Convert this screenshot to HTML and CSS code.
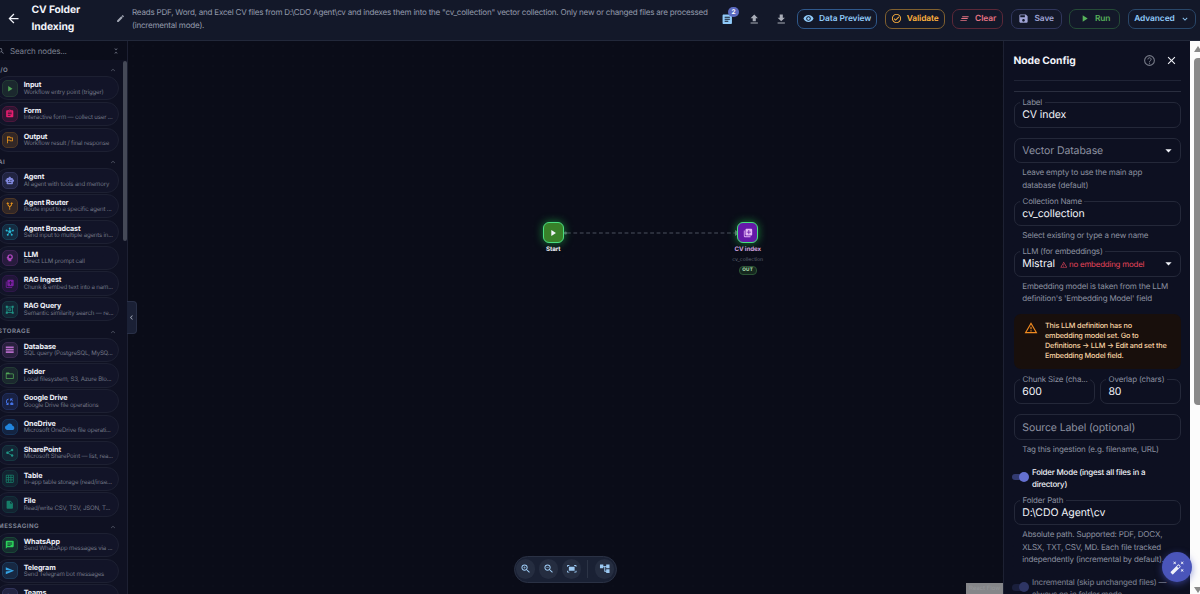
FILE: index.html
```html
<!DOCTYPE html>
<html lang="en">
<head>
	<meta charset="UTF-8">
	<meta name="viewport" content="width=device-width">
	<title>CV Folder Indexing</title>
	<link rel="stylesheet" href="styles.css">
</head>
<body>
<svg class="sprite">
	<symbol id="back" viewBox="0 0 24 24"><path d="M20 11H7.83l5.59-5.59L12 4l-8 8 8 8 1.41-1.41L7.83 13H20v-2z"/></symbol>
	<symbol id="edit" viewBox="0 0 24 24"><path d="M3 17.25V21h3.75L17.81 9.94l-3.75-3.75L3 17.25zM20.71 7.04a.996.996 0 0 0 0-1.41l-2.34-2.34a.996.996 0 0 0-1.41 0l-1.83 1.83 3.75 3.75 1.83-1.83z"/></symbol>
	<symbol id="article" viewBox="0 0 24 24"><path d="M19 3H5c-1.1 0-2 .9-2 2v14c0 1.1.9 2 2 2h14c1.1 0 2-.9 2-2V5c0-1.1-.9-2-2-2zm-5 14H7v-2h7v2zm3-4H7v-2h10v2zm0-4H7V7h10v2z"/></symbol>
	<symbol id="upload" viewBox="0 0 24 24"><path d="M5 20h14v-2H5v2zm4-4h6v-6h4l-7-7-7 7h4z"/></symbol>
	<symbol id="download" viewBox="0 0 24 24"><path d="M5 20h14v-2H5v2zM19 9h-4V3H9v6H5l7 7 7-7z"/></symbol>
	<symbol id="eye" viewBox="0 0 24 24"><path d="M12 4.5C7 4.5 2.73 7.61 1 12c1.73 4.39 6 7.5 11 7.5s9.27-3.11 11-7.5c-1.73-4.39-6-7.5-11-7.5zM12 17c-2.76 0-5-2.24-5-5s2.24-5 5-5 5 2.24 5 5-2.24 5-5 5zm0-8c-1.66 0-3 1.34-3 3s1.34 3 3 3 3-1.34 3-3-1.34-3-3-3z"/></symbol>
	<symbol id="check" viewBox="0 0 24 24"><path d="M16.59 7.58 10 14.17l-2.59-2.58L6 13l4 4 8-8zM12 2a10 10 0 1 0 0 20 10 10 0 0 0 0-20zm0 18c-4.42 0-8-3.58-8-8s3.58-8 8-8 8 3.58 8 8-3.58 8-8 8z"/></symbol>
	<symbol id="clear" viewBox="0 0 24 24"><path d="M5 13h14v-2H5v2zm-2 4h14v-2H3v2zM7 7v2h14V7H7z"/></symbol>
	<symbol id="save" viewBox="0 0 24 24"><path d="M17 3H5c-1.11 0-2 .9-2 2v14c0 1.1.89 2 2 2h14c1.1 0 2-.9 2-2V7l-4-4zm-5 16c-1.66 0-3-1.34-3-3s1.34-3 3-3 3 1.34 3 3-1.34 3-3 3zm3-10H5V5h10v4z"/></symbol>
	<symbol id="play" viewBox="0 0 24 24"><path d="M8 5v14l11-7z"/></symbol>
	<symbol id="down" viewBox="0 0 24 24"><path d="M7.41 8.59 12 13.17l4.59-4.58L18 10l-6 6-6-6z"/></symbol>
	<symbol id="up" viewBox="0 0 24 24"><path d="M7.41 15.41 12 10.83l4.59 4.58L18 14l-6-6-6 6z"/></symbol>
	<symbol id="left" viewBox="0 0 24 24"><path d="M15.41 7.41 14 6l-6 6 6 6 1.41-1.41L10.83 12z"/></symbol>
	<symbol id="caret" viewBox="0 0 24 24"><path d="M7 10l5 5 5-5z"/></symbol>
	<symbol id="search" viewBox="0 0 24 24"><path d="M15.5 14h-.79l-.28-.27A6.47 6.47 0 0 0 16 9.5 6.5 6.5 0 1 0 9.5 16c1.61 0 3.09-.59 4.23-1.57l.27.28v.79l5 4.99L20.49 19l-4.99-5zm-6 0C7.01 14 5 11.99 5 9.5S7.01 5 9.5 5 14 7.01 14 9.5 11.99 14 9.5 14z"/></symbol>
	<symbol id="zoomin" viewBox="0 0 24 24"><use href="#search" width="24" height="24"/><path d="M12 10h-2v2H9v-2H7V9h2V7h1v2h2z"/></symbol>
	<symbol id="zoomout" viewBox="0 0 24 24"><use href="#search" width="24" height="24"/><path d="M7 9h5v1H7z"/></symbol>
	<symbol id="fit" viewBox="0 0 24 24"><path d="M17 4h3c1.1 0 2 .9 2 2v2h-2V6h-3V4zM4 8V6h3V4H4c-1.1 0-2 .9-2 2v2h2zm16 8v2h-3v2h3c1.1 0 2-.9 2-2v-2h-2zM7 18H4v-2H2v2c0 1.1.9 2 2 2h3v-2zM18 8H6v8h12V8z"/></symbol>
	<symbol id="tree" viewBox="0 0 24 24"><path d="M22 11V3h-7v3H9V3H2v8h7V8h2v10h4v3h7v-8h-7v3h-2V8h2v3z"/></symbol>
	<symbol id="fold" viewBox="0 0 24 24"><path d="M7.41 18.59 8.83 20 12 16.83 15.17 20l1.41-1.41L12 14l-4.59 4.59zm9.18-13.18L15.17 4 12 7.17 8.83 4 7.41 5.41 12 10l4.59-4.59z"/></symbol>
	<symbol id="form" viewBox="0 0 24 24"><path d="M19 3h-4.18C14.4 1.84 13.3 1 12 1s-2.4.84-2.82 2H5c-1.1 0-2 .9-2 2v14c0 1.1.9 2 2 2h14c1.1 0 2-.9 2-2V5c0-1.1-.9-2-2-2zm-7 0c.55 0 1 .45 1 1s-.45 1-1 1-1-.45-1-1 .45-1 1-1zm2 14H7v-2h7v2zm3-4H7v-2h10v2zm0-4H7V7h10v2z"/></symbol>
	<symbol id="flag" viewBox="0 0 24 24"><path d="M14 6l-1-2H5v17h2v-7h5l1 2h7V6h-6zm4 8h-4l-1-2H7V6h5l1 2h5v6z"/></symbol>
	<symbol id="robot" viewBox="0 0 24 24"><path d="M20 9V7c0-1.1-.9-2-2-2h-3c0-1.66-1.34-3-3-3S9 3.34 9 5H6c-1.1 0-2 .9-2 2v2c-1.66 0-3 1.34-3 3s1.34 3 3 3v4c0 1.1.9 2 2 2h12c1.1 0 2-.9 2-2v-4c1.66 0 3-1.34 3-3s-1.34-3-3-3zM7.5 11.5c0-.83.67-1.5 1.5-1.5s1.5.67 1.5 1.5S9.83 13 9 13s-1.5-.67-1.5-1.5zM16 17H8v-2h8v2zm-1-4c-.83 0-1.5-.67-1.5-1.5S14.17 10 15 10s1.5.67 1.5 1.5S15.83 13 15 13z"/></symbol>
	<symbol id="route" viewBox="0 0 24 24"><path d="M3 7l4-4 4 4H8c.1 3 1 4 4 6 3-2 3.9-3 4-6h-3l4-4 4 4h-3c-.1 4-1.5 6-5 8v7h-2v-7c-3.5-2-4.9-4-5-8z"/></symbol>
	<symbol id="hub" viewBox="0 0 24 24"><path d="M12 12V4M12 12l8-3M12 12l5 7M12 12l-5 7M12 12L4 9" fill="none" stroke="currentColor" stroke-width="1.6"/><circle cx="12" cy="12" r="3.5"/><circle cx="12" cy="4" r="2.5"/><circle cx="20" cy="9" r="2.5"/><circle cx="17" cy="19.5" r="2.5"/><circle cx="7" cy="19.5" r="2.5"/><circle cx="4" cy="9" r="2.5"/></symbol>
	<symbol id="mind" viewBox="0 0 24 24"><path fill-rule="evenodd" d="M13 3C9.2 3 6.2 5.9 6 9.6L4.1 12.2c-.3.3 0 .8.4.8H6v3c0 1.1.9 2 2 2h1v3h7v-4.7c2.4-1.1 4-3.5 4-6.3 0-3.9-3.1-7-7-7zm0 3.5a3.5 3.5 0 1 1 0 7 3.5 3.5 0 0 1 0-7z"/></symbol>
	<symbol id="library" viewBox="0 0 24 24"><path d="M4 6H2v14c0 1.1.9 2 2 2h14v-2H4V6zm16-4H8c-1.1 0-2 .9-2 2v12c0 1.1.9 2 2 2h12c1.1 0 2-.9 2-2V4c0-1.1-.9-2-2-2zm-1 9h-4v4h-2v-4H9V9h4V5h2v4h4v2z"/></symbol>
	<symbol id="query" viewBox="0 0 24 24"><path d="M5 5h14v14H5zM9.500 9.500h5v5h-5z" fill="none" stroke="currentColor" stroke-width="2"/><path d="M2 2h5v5H2zM17 2h5v5h-5zM2 17h5v5H2zM17 17h5v5h-5z"/></symbol>
	<symbol id="storage" viewBox="0 0 24 24"><path d="M2 20h20v-4H2v4zM2 4v4h20V4H2zm0 10h20v-4H2v4z"/></symbol>
	<symbol id="folder" viewBox="0 0 24 24"><path d="M20 6h-8l-2-2H4c-1.1 0-2 .9-2 2v12c0 1.1.9 2 2 2h16c1.1 0 2-.9 2-2V8c0-1.1-.9-2-2-2zm0 12H4V8h16v10z"/></symbol>
	<symbol id="gdrive" viewBox="0 0 24 24"><path d="M9 4v2.3A6 6 0 0 0 6.2 16L9 13.5V20H2.500l2.300-2.300A8 8 0 0 1 9 4zM13 4h7l-2.300 2.300A8 8 0 0 1 20 11h-2.200A6 6 0 0 0 16 7.700l-3 2.800zM20 15.500a2.800 2.800 0 0 0-5.200-.7A2.700 2.700 0 0 0 15 20h4.800a2.300 2.300 0 0 0 .2-4.500z"/></symbol>
	<symbol id="cloud" viewBox="0 0 24 24"><path d="M19.35 10.04C18.67 6.59 15.64 4 12 4 9.11 4 6.6 5.64 5.35 8.04 2.34 8.36 0 10.91 0 14c0 3.31 2.69 6 6 6h13c2.76 0 5-2.24 5-5 0-2.64-2.05-4.78-4.65-4.96z"/></symbol>
	<symbol id="share" viewBox="0 0 24 24"><path d="M18 5L6 12l12 7" fill="none" stroke="currentColor" stroke-width="2"/><circle cx="18" cy="5" r="3"/><circle cx="6" cy="12" r="3"/><circle cx="18" cy="19" r="3"/></symbol>
	<symbol id="grid" viewBox="0 0 24 24"><path d="M20 2H4c-1.1 0-2 .9-2 2v16c0 1.1.9 2 2 2h16c1.1 0 2-.9 2-2V4c0-1.1-.9-2-2-2zM8 20H4v-4h4v4zm0-6H4v-4h4v4zm0-6H4V4h4v4zm6 12h-4v-4h4v4zm0-6h-4v-4h4v4zm0-6h-4V4h4v4zm6 12h-4v-4h4v4zm0-6h-4v-4h4v4zm0-6h-4V4h4v4z"/></symbol>
	<symbol id="file" viewBox="0 0 24 24"><path d="M6 2c-1.1 0-2 .9-2 2v16c0 1.1.9 2 2 2h12c1.1 0 2-.9 2-2V8l-6-6H6zm7 7V3.500L18.500 9H13z"/></symbol>
	<symbol id="chat" viewBox="0 0 24 24"><path d="M20 2H4c-1.1 0-2 .9-2 2v18l4-4h14c1.1 0 2-.9 2-2V4c0-1.1-.9-2-2-2zM6 6h12v2H6zm0 3.500h12v2H6zM14 14.500H6v-2h8z"/></symbol>
	<symbol id="send" viewBox="0 0 24 24"><path d="M2 21l21-9L2 3v7l15 2-15 2z"/></symbol>
	<symbol id="group" viewBox="0 0 24 24"><circle cx="8" cy="8" r="3.5"/><circle cx="16.5" cy="8" r="3"/><path d="M1 19c0-4 3-6 7-6s7 2 7 6zM16.500 19H23c0-4-2.500-6-7-6 1.500 1.500.5 3 .5 6z"/></symbol>
	<symbol id="help" viewBox="0 0 24 24"><circle cx="12" cy="12" r="9" fill="none" stroke="currentColor" stroke-width="2"/><path d="M9 10a3 3 0 1 1 4.500 2.500c-1 .6-1.500 1-1.500 2.300" fill="none" stroke="currentColor" stroke-width="1.8"/><path d="M11 16h2v2h-2z"/></symbol>
	<symbol id="close" viewBox="0 0 24 24"><path d="M19 6.41 17.59 5 12 10.59 6.41 5 5 6.41 10.59 12 5 17.59 6.41 19 12 13.41 17.59 19 19 17.59 13.41 12z"/></symbol>
	<symbol id="warn" viewBox="0 0 24 24"><path d="M12 5.99 19.53 19H4.47L12 5.99M12 2 1 21h22L12 2zm1 14h-2v2h2v-2zm0-6h-2v4h2v-4z"/></symbol>
	<symbol id="wand" viewBox="0 0 24 24"><path d="M7.5 5.6 10 7 8.6 4.5 10 2 7.5 3.4 5 2l1.4 2.5L5 7zm12 9.8L17 14l1.4 2.5L17 19l2.5-1.4L22 19l-1.4-2.5L22 14zM22 2l-2.5 1.4L17 2l1.4 2.5L17 7l2.5-1.4L22 7l-1.4-2.5zm-7.63 5.29a.996.996 0 0 0-1.41 0L1.29 18.96a.996.996 0 0 0 0 1.41l2.34 2.34c.39.39 1.02.39 1.41 0L16.7 11.05c.39-.39.39-1.02 0-1.41l-2.33-2.35zm-1.03 5.49-2.12-2.12 2.44-2.44 2.12 2.12-2.44 2.44z"/></symbol>
</svg>

<header class="header">
	<svg class="back"><use href="#back"/></svg>
	<h1 class="title">CV Folder Indexing</h1>
	<svg class="edit"><use href="#edit"/></svg>
	<p class="about">Reads PDF, Word, and Excel CV files from D:\CDO Agent\cv and indexes them into the "cv_collection" vector collection. Only new or changed files are processed<br>(incremental mode).</p>
	<div class="tools">
		<span class="tool notes"><svg><use href="#article"/></svg><b class="badge">2</b></span>
		<span class="tool"><svg><use href="#upload"/></svg></span>
		<span class="tool"><svg><use href="#download"/></svg></span>
	</div>
	<nav class="actions">
		<button class="btn preview"><svg><use href="#eye"/></svg>Data Preview</button>
		<button class="btn validate"><svg><use href="#check"/></svg>Validate</button>
		<button class="btn clear"><svg><use href="#clear"/></svg>Clear</button>
		<button class="btn save"><svg><use href="#save"/></svg>Save</button>
		<button class="btn run"><svg><use href="#play"/></svg>Run</button>
		<button class="btn advanced">Advanced<svg><use href="#down"/></svg></button>
	</nav>
</header>

<main class="main">
	<aside class="sidebar">
		<div class="search"><svg><use href="#search"/></svg><span>Search nodes...</span><svg class="fold"><use href="#fold"/></svg></div>
		<div class="palette">
			<h2 class="group">I/O<svg><use href="#up"/></svg></h2>
			<div class="item green"><i><svg><use href="#play"/></svg></i><p><b>Input</b><span>Workflow entry point (trigger)</span></p></div>
			<div class="item pink"><i><svg><use href="#form"/></svg></i><p><b>Form</b><span>Interactive form — collect user ...</span></p></div>
			<div class="item orange"><i><svg><use href="#flag"/></svg></i><p><b>Output</b><span>Workflow result / final response</span></p></div>
			<h2 class="group">AI<svg><use href="#up"/></svg></h2>
			<div class="item indigo"><i><svg><use href="#robot"/></svg></i><p><b>Agent</b><span>AI agent with tools and memory</span></p></div>
			<div class="item orange"><i><svg><use href="#route"/></svg></i><p><b>Agent Router</b><span>Route input to a specific agent ...</span></p></div>
			<div class="item cyan"><i><svg><use href="#hub"/></svg></i><p><b>Agent Broadcast</b><span>Send input to multiple agents in...</span></p></div>
			<div class="item purple"><i><svg><use href="#mind"/></svg></i><p><b>LLM</b><span>Direct LLM prompt call</span></p></div>
			<div class="item violet"><i><svg><use href="#library"/></svg></i><p><b>RAG Ingest</b><span>Chunk &amp; embed text into a nam...</span></p></div>
			<div class="item teal"><i><svg><use href="#query"/></svg></i><p><b>RAG Query</b><span>Semantic similarity search — re...</span></p></div>
			<h2 class="group">STORAGE<svg><use href="#up"/></svg></h2>
			<div class="item lilac"><i><svg><use href="#storage"/></svg></i><p><b>Database</b><span>SQL query (PostgreSQL, MySQ...</span></p></div>
			<div class="item green"><i><svg><use href="#folder"/></svg></i><p><b>Folder</b><span>Local filesystem, S3, Azure Blo...</span></p></div>
			<div class="item royal"><i><svg><use href="#gdrive"/></svg></i><p><b>Google Drive</b><span>Google Drive file operations</span></p></div>
			<div class="item blue"><i><svg><use href="#cloud"/></svg></i><p><b>OneDrive</b><span>Microsoft OneDrive file operati...</span></p></div>
			<div class="item teal"><i><svg><use href="#share"/></svg></i><p><b>SharePoint</b><span>Microsoft SharePoint — list, rea...</span></p></div>
			<div class="item pine"><i><svg><use href="#grid"/></svg></i><p><b>Table</b><span>In-app table storage (read/inse...</span></p></div>
			<div class="item pine"><i><svg><use href="#file"/></svg></i><p><b>File</b><span>Read/write CSV, TSV, JSON, T...</span></p></div>
			<h2 class="group">MESSAGING<svg><use href="#up"/></svg></h2>
			<div class="item lime"><i><svg><use href="#chat"/></svg></i><p><b>WhatsApp</b><span>Send WhatsApp messages via ...</span></p></div>
			<div class="item sky"><i><svg><use href="#send"/></svg></i><p><b>Telegram</b><span>Send Telegram bot messages</span></p></div>
			<div class="item indigo"><i><svg><use href="#group"/></svg></i><p><b>Teams</b></p></div>
		</div>
		<div class="thumb"></div>
	</aside>

	<section class="canvas">
		<div class="collapse"><svg><use href="#left"/></svg></div>
		<svg class="edge" viewBox="0 0 180 10"><path d="M3 5h168"/><path class="tip" d="M171 2l5 3-5 3z"/><circle cx="1.5" cy="5" r="1.5"/></svg>
		<div class="node start">
			<div class="tile"><svg><use href="#play"/></svg></div>
			<b>Start</b>
		</div>
		<div class="node index">
			<div class="tile"><svg><use href="#library"/></svg></div>
			<b>CV index</b>
			<span>cv_collection</span>
			<em>OUT</em>
		</div>
		<div class="controls">
			<span><svg><use href="#zoomin"/></svg></span>
			<span><svg><use href="#zoomout"/></svg></span>
			<span><svg><use href="#fit"/></svg></span>
			<hr>
			<span><svg><use href="#tree"/></svg></span>
		</div>
		<div class="attribution">React Flow</div>
	</section>

	<aside class="config">
		<div class="config-head"><h2>Node Config</h2><svg class="help"><use href="#help"/></svg><svg class="close"><use href="#close"/></svg></div>
		<div class="rule"></div>
		<div class="field"><label>Label</label>CV index</div>
		<div class="field empty">Vector Database<svg><use href="#caret"/></svg></div>
		<p class="hint">Leave empty to use the main app<br>database (default)</p>
		<div class="field"><label>Collection Name</label>cv_collection</div>
		<p class="hint">Select existing or type a new name</p>
		<div class="field"><label>LLM (for embeddings)</label>Mistral<small><svg class="mini"><use href="#warn"/></svg>no embedding model</small><svg><use href="#caret"/></svg></div>
		<p class="hint">Embedding model is taken from the LLM<br>definition's 'Embedding Model' field</p>
		<div class="alert"><svg><use href="#warn"/></svg><p>This LLM definition has no<br>embedding model set. Go to<br>Definitions → LLM → Edit and set the<br>Embedding Model field.</p></div>
		<div class="pair">
			<div class="field"><label>Chunk Size (cha...</label>600</div>
			<div class="field"><label>Overlap (chars)</label>80</div>
		</div>
		<div class="field empty">Source Label (optional)</div>
		<p class="hint">Tag this ingestion (e.g. filename, URL)</p>
		<div class="switch"><i></i><p>Folder Mode (ingest all files in a<br>directory)</p></div>
		<div class="field path"><label>Folder Path</label>D:\CDO Agent\cv</div>
		<p class="hint">Absolute path. Supported: PDF, DOCX,<br>XLSX, TXT, CSV, MD. Each file tracked<br>independently (incremental by default).</p>
		<div class="switch off"><i></i><p>Incremental (skip unchanged files) —<br>always on in folder mode</p></div>
	</aside>

	<div class="scrollbar">
		<svg viewBox="0 0 10 8"><path d="M4 7l4-6 4 6z"/></svg>
		<div></div>
		<svg viewBox="0 0 10 8"><path d="M4 1l4 6 4-6z"/></svg>
	</div>
</main>
<div class="fab"><svg><use href="#wand"/></svg></div>
</body>
</html>
```
FILE: styles.css
```css
*{
	box-sizing: border-box;
}
html,body{
	margin: 0;
	height: 100%;
	overflow: hidden;
}
body{
	display: flex;
	flex-direction: column;
	background: #0a0b17;
	color: #f1f3f9;
	font-family: Inter, "Liberation Sans", sans-serif;
	text-rendering: geometricPrecision;
}
p,h1,h2{
	margin: 0;
}
svg{
	fill: currentColor;
	flex: none;
	display: block;
}
.sprite{
	position: absolute;
	width: 0;
	height: 0;
}

/* header */
.header{
	height: 41px;
	flex: none;
	display: flex;
	align-items: flex-start;
	background: #131829;
	border-bottom: 1px solid #22283a;
}
.back{
	width: 15px;
	height: 15px;
	margin: 11px 0 0 6px;
}
.title{
	width: 74px;
	margin: 1.7px 0 0 10.5px;
	font-size: 10.3px;
	font-weight: 700;
	line-height: 17.8px;
	letter-spacing: -.1px;
}
.edit{
	width: 9px;
	height: 9px;
	margin: 14px 0 0 10px;
	color: #a3a8b5;
}
.about{
	width: 590px;
	margin: 6.3px 0 0 7.5px;
	font-size: 8.05px;
	letter-spacing: -.22px;
	line-height: 12.6px;
	color: #949bac;
	white-space: nowrap;
}
.tools{
	display: flex;
	gap: 14.3px;
	margin: 12.5px 0 0 -.8px;
	color: #a9adb8;
}
.tool{
	position: relative;
}
.tool svg{
	width: 12.5px;
	height: 12.5px;
}
.notes{
	color: #90caf9;
}
.badge{
	position: absolute;
	left: 7px;
	top: -6px;
	width: 10.5px;
	height: 10.5px;
	border-radius: 50%;
	background: #5c6bc0;
	color: #fff;
	font-size: 6.5px;
	line-height: 10.5px;
	text-align: center;
}
.actions{
	display: flex;
	gap: 7.5px;
	margin: 8.7px 0 0 9.9px;
}
.btn{
	display: flex;
	align-items: center;
	justify-content: center;
	gap: 5px;
	height: 20px;
	padding: 0;
	border: 1px solid;
	border-radius: 7px;
	background: none;
	font: 600 8.4px Inter, "Liberation Sans", sans-serif;
	text-rendering: geometricPrecision;
	letter-spacing: -.07px;
	white-space: nowrap;
}
.btn svg{
	width: 11px;
	height: 11px;
}
.preview{
	width: 80px;
	color: #90caf9;
	border-color: #2f588b;
}
.validate{
	width: 60px;
	color: #ffb23e;
	border-color: #80602f;
}
.clear{
	width: 51px;
	color: #e57383;
	border-color: #5b2838;
}
.save{
	width: 51px;
	color: #9fa3d4;
	border-color: #30365c;
}
.run{
	width: 51px;
	color: #57b35b;
	border-color: #254b37;
}
.advanced{
	width: 68.5px;
	color: #90caf9;
	border-color: #294769;
}
.advanced svg{
	width: 10px;
	height: 10px;
}

.main{
	flex: 1;
	min-height: 0;
	display: flex;
}

/* node palette */
.sidebar{
	position: relative;
	width: 128px;
	flex: none;
	overflow: hidden;
	background: #0f1122;
	border-right: 1px solid #1d2032;
}
.search{
	height: 19px;
	display: flex;
	align-items: center;
	background: #0b0d1a;
	color: #7c8190;
	font-size: 8px;
	letter-spacing: -.15px;
}
.search svg{
	width: 8px;
	height: 8px;
	margin-left: -3px;
}
.search span{
	width: 102px;
	margin-left: 5px;
}
.search .fold{
	margin-left: 0;
}
.palette{
	width: 122px;
	padding-top: 1.6px;
}
.group{
	display: flex;
	align-items: center;
	justify-content: space-between;
	height: 14.7px;
	padding: 2.7px 5px 0 0;
	margin-left: -2px;
	font-size: 6.1px;
	font-weight: 700;
	letter-spacing: .45px;
	color: #7d8293;
}
.group svg{
	width: 8px;
	height: 8px;
	color: #575c6c;
}
.item{
	display: flex;
	align-items: center;
	height: 24.2px;
	margin: 0 3px 1.6px -4px;
	padding-left: 4.5px;
	border: 1px solid #1d2032;
	border-radius: 12px;
	background: #121428;
}
.item i{
	width: 16.5px;
	height: 16.5px;
	flex: none;
	display: flex;
	align-items: center;
	justify-content: center;
	border: 1px solid color-mix(in srgb, currentColor 27%, #121428);
	border-radius: 5px;
	background: color-mix(in srgb, currentColor 14%, #121428);
}
.item i svg{
	width: 9.5px;
	height: 9.5px;
}
.item p{
	height: 14.2px;
	margin-left: 5.7px;
	white-space: nowrap;
}
.item b,.item p span{
	display: block;
	line-height: 7.3px;
}
.item b{
	font-size: 7.2px;
	font-weight: 700;
	letter-spacing: -.12px;
	color: #edeff7;
}
.item p span{
	font-size: 6.1px;
	letter-spacing: -.19px;
	color: #717585;
}
.green{ color: #51a656; }
.pink{ color: #e91e70; }
.orange{ color: #f59b1c; }
.indigo{ color: #8088dd; }
.cyan{ color: #29b6d3; }
.purple{ color: #ab47bc; }
.violet{ color: #7b1fa2; }
.teal{ color: #209586; }
.lilac{ color: #b46bc8; }
.royal{ color: #4674e8; }
.blue{ color: #2185dd; }
.pine{ color: #167e69; }
.lime{ color: #2bd05b; }
.sky{ color: #36a5e5; }
.thumb{
	position: absolute;
	right: 0;
	top: 20px;
	width: 4px;
	height: 180px;
	border-radius: 2px;
	background: #454957;
}

/* canvas */
.canvas{
	position: relative;
	flex: 1;
	background: #0a0c18 radial-gradient(circle, #10131f .6px, transparent .8px) 0 0 / 10px 10px;
}
.collapse{
	position: absolute;
	left: -1px;
	top: 260px;
	width: 10px;
	height: 33px;
	display: flex;
	align-items: center;
	border: 1px solid #293047;
	border-left: 0;
	border-radius: 0 4px 4px 0;
	background: #1a2035;
	color: #a5abba;
}
.collapse svg{
	width: 9px;
	height: 9px;
}
.edge{
	position: absolute;
	left: 436px;
	top: 186.5px;
	width: 180px;
	height: 10px;
	fill: #656b79;
}
.edge path{
	stroke: #4b515e;
	stroke-width: 1;
	stroke-dasharray: 3.8 2.6;
}
.edge .tip{
	stroke: none;
}
.node{
	position: absolute;
	top: 181px;
	width: 60px;
	display: flex;
	flex-direction: column;
	align-items: center;
}
.start{
	left: 395.3px;
}
.index{
	left: 589.7px;
}
.tile{
	width: 21px;
	height: 21px;
	display: flex;
	align-items: center;
	justify-content: center;
	border: 1.8px solid #4ade80;
	border-radius: 6px;
	background: #388129;
	box-shadow: 0 0 8px rgba(34,197,74,.65);
}
.tile svg{
	width: 10px;
	height: 10px;
}
.node b{
	margin-top: 3.2px;
	font-size: 6.2px;
	line-height: 8px;
	font-weight: 700;
	letter-spacing: -.1px;
}
.index .tile{
	background: #6519a8;
	color: #e4b6f6;
}
.index b{
	color: #cfa0df;
}
.node span{
	margin-top: 3px;
	font-size: 5.2px;
	line-height: 7px;
	letter-spacing: -.05px;
	color: #5f6473;
}
.node em{
	margin-top: 2.2px;
	width: 18px;
	height: 8.5px;
	border: 1px solid #2b5435;
	border-radius: 4px;
	background: #15271e;
	color: #a7d6aa;
	font-size: 4.7px;
	font-style: normal;
	font-weight: 800;
	letter-spacing: .3px;
	line-height: 7.3px;
	text-align: center;
}
.controls{
	position: absolute;
	left: 386px;
	bottom: 11.5px;
	width: 102.5px;
	height: 27px;
	display: flex;
	align-items: center;
	gap: 3.5px;
	padding-left: .7px;
	border: 1px solid #2a3144;
	border-radius: 14px;
	background: #1a2134;
	color: #9cc9f2;
}
.controls span{
	width: 19.5px;
	height: 19.5px;
	display: flex;
	align-items: center;
	justify-content: center;
	border-radius: 50%;
	background: #252d40;
}
.controls svg{
	width: 11.5px;
	height: 11.5px;
}
.controls hr{
	width: 1px;
	height: 18px;
	margin: 0 2.7px;
	border: 0;
	background: #2c3446;
}
.attribution{
	position: absolute;
	right: 0;
	bottom: 0;
	width: 37px;
	height: 11px;
	background: #858689;
	color: #96979a;
	font-size: 6px;
	line-height: 11px;
	text-align: center;
}

/* config panel */
.config{
	width: 187px;
	flex: none;
	overflow: hidden;
	padding: 0 9.3px 0 9.5px;
	background: #0d1021;
	border-left: 1px solid #1d2133;
}
.config-head{
	display: flex;
	align-items: center;
	height: 40px;
	border-bottom: 1px solid #202436;
}
.config-head h2{
	flex: 1;
	padding-top: 1px;
	font-size: 10.3px;
	font-weight: 700;
	letter-spacing: -.08px;
}
.help{
	width: 13px;
	height: 13px;
	color: #777b88;
}
.close{
	width: 13px;
	height: 13px;
	margin: 0 3px 0 8.5px;
}
.rule{
	height: 11px;
	border-bottom: 1px solid #2a2e3f;
}
.field{
	position: relative;
	display: flex;
	align-items: center;
	height: 25.6px;
	margin-top: 10px;
	padding: .4px 0 0 7.8px;
	border: 1px solid #242839;
	border-radius: 7px;
	font-size: 10.5px;
	letter-spacing: -.1px;
}
.field label{
	position: absolute;
	left: 5.5px;
	top: -6px;
	padding: 0 2.5px;
	background: #0d1021;
	color: #8c91a0;
	font-size: 7.95px;
	letter-spacing: -.16px;
	line-height: 11px;
	white-space: nowrap;
}
.field > svg{
	width: 15px;
	height: 15px;
	margin: 0 4px 0 auto;
	color: #f1f3f9;
}
.field small{
	display: flex;
	align-items: center;
	gap: 1.5px;
	margin: 1px 0 0 5px;
	color: #e5455a;
	font-size: 7.9px;
	letter-spacing: -.2px;
}
.mini{
	width: 7.5px;
	height: 7.5px;
}
.empty{
	color: #8c91a0;
}
.hint{
	position: relative;
	top: .5px;
	margin: 2.5px 0 0 8.8px;
	font-size: 8px;
	letter-spacing: -.18px;
	line-height: 12.4px;
	color: #8c91a0;
	white-space: nowrap;
}
.alert{
	display: flex;
	height: 55px;
	margin-top: 9.7px;
	padding: 7.7px 0 0 10.5px;
	border-radius: 7px;
	background: #180f0c;
	color: #f8d4a4;
	font-size: 7.3px;
	font-weight: 500;
	letter-spacing: -.18px;
	line-height: 9.9px;
	white-space: nowrap;
}
.alert svg{
	width: 14px;
	height: 14px;
	margin-right: 7px;
	color: #f08a20;
}
.pair{
	display: flex;
	gap: 5px;
}
.pair .field{
	flex: 1;
}
.switch{
	display: flex;
	align-items: center;
	margin: 10px 0 -.2px -2px;
	font-size: 7.95px;
	font-weight: 500;
	letter-spacing: -.2px;
	line-height: 12.5px;
	white-space: nowrap;
}
.switch p{
	padding-top: 1px;
	margin-bottom: -1px;
}
.switch i{
	position: relative;
	width: 16.5px;
	height: 6.5px;
	margin-right: 4px;
	border-radius: 4px;
	background: #323a70;
}
.switch i::after{
	content: "";
	position: absolute;
	right: -1px;
	top: -1.8px;
	width: 10px;
	height: 10px;
	border-radius: 50%;
	background: #6470d0;
}
.off{
	color: #747988;
}
.off i{
	background: #1a1f3c;
}
.off i::after{
	background: #2e3564;
}

/* page scrollbar */
.scrollbar{
	width: 10px;
	flex: none;
	display: flex;
	flex-direction: column;
	background: #fcfcfc;
	color: #898989;
}
.scrollbar svg{
	width: 10px;
	height: 8px;
	margin-top: 4px;
}
.scrollbar div{
	width: 9px;
	height: 347px;
	margin: 5px 0 auto 4px;
	border-radius: 4px;
	background: #898989;
}
.fab{
	position: absolute;
	left: 1162px;
	top: 552px;
	width: 30px;
	height: 30px;
	display: flex;
	align-items: center;
	justify-content: center;
	border-radius: 50%;
	background: #4a55ba;
	box-shadow: 0 2px 7px rgba(74,85,190,.6);
}
.fab svg{
	width: 15px;
	height: 15px;
}
```
